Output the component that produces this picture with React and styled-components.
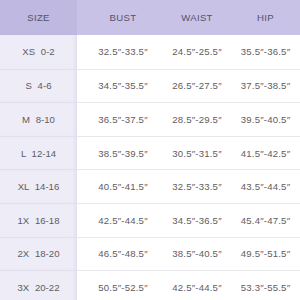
import React from 'react';
import styled, { createGlobalStyle } from 'styled-components';

const GlobalStyle = createGlobalStyle`
  html, body {
    margin: 0;
    padding: 0;
    background: #ffffff;
  }
`;

const Table = styled.div`
  width: 300px;
  height: 300px;
  display: grid;
  grid-template-columns: 77px 82px 70px 71px;
  grid-template-rows: 35px repeat(8, 33.6px);
  font-family: 'Liberation Sans', Arial, sans-serif;
  font-size: 9.6px;
  color: #5e5c63;
  overflow: hidden;
`;

const HeadCell = styled.div`
  display: flex;
  align-items: center;
  justify-content: center;
  background: ${(p) => (p.$first ? '#bfb8e0' : '#c8c2e6')};
  color: #55536a;
  font-size: 9.6px;
  letter-spacing: 0.3px;
  padding-left: ${(p) => p.$shift || 0}px;
`;

const SizeCell = styled.div`
  display: flex;
  align-items: center;
  justify-content: center;
  background: #eeecf7;
  border-top: ${(p) => (p.$top ? 'none' : '1px solid #e2e0ec')};
  box-shadow: inset -4px 0 4px -3px rgba(120, 110, 170, 0.16);
  word-spacing: 3px;
`;

const Cell = styled.div`
  display: flex;
  align-items: center;
  justify-content: center;
  background: #ffffff;
  border-top: ${(p) => (p.$top ? 'none' : '1px solid #e8e8ec')};
  padding-left: ${(p) => p.$shift || 0}px;
  letter-spacing: 0.2px;
`;

const rows = [
  ['XS  0-2', '32.5″-33.5″', '24.5″-25.5″', '35.5″-36.5″'],
  ['S  4-6', '34.5″-35.5″', '26.5″-27.5″', '37.5″-38.5″'],
  ['M  8-10', '36.5″-37.5″', '28.5″-29.5″', '39.5″-40.5″'],
  ['L  12-14', '38.5″-39.5″', '30.5″-31.5″', '41.5″-42.5″'],
  ['XL  14-16', '40.5″-41.5″', '32.5″-33.5″', '43.5″-44.5″'],
  ['1X  16-18', '42.5″-44.5″', '34.5″-36.5″', '45.4″-47.5″'],
  ['2X  18-20', '46.5″-48.5″', '38.5″-40.5″', '49.5″-51.5″'],
  ['3X  20-22', '50.5″-52.5″', '42.5″-44.5″', '53.3″-55.5″'],
];

const App = () => {
  return (
    <>
      <GlobalStyle />
      <Table>
        <HeadCell $first>SIZE</HeadCell>
        <HeadCell $shift={10}>BUST</HeadCell>
        <HeadCell $shift={6}>WAIST</HeadCell>
        <HeadCell $shift={2}>HIP</HeadCell>
        {rows.map((r, i) => (
          <React.Fragment key={r[0]}>
            <SizeCell $top={i === 0}>{r[0]}</SizeCell>
            <Cell $top={i === 0} $shift={10}>{r[1]}</Cell>
            <Cell $top={i === 0} $shift={6}>{r[2]}</Cell>
            <Cell $top={i === 0} $shift={2}>{r[3]}</Cell>
          </React.Fragment>
        ))}
      </Table>
    </>
  );
};

export default App;
